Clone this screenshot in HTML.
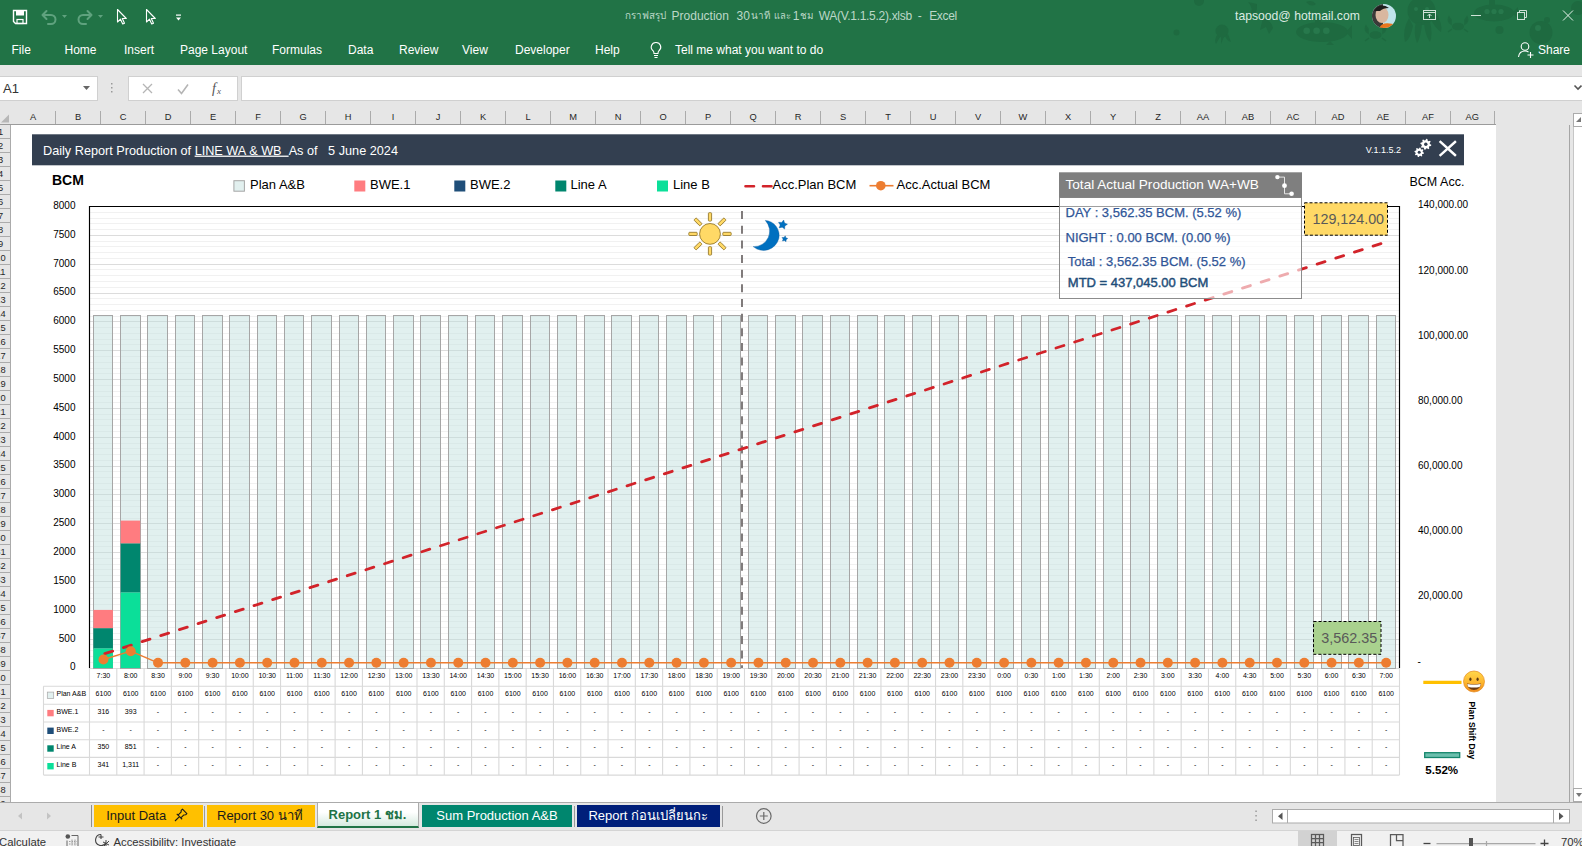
<!DOCTYPE html>
<html lang="en"><head><meta charset="utf-8"><title>Report 1 ชม. - Excel</title>
<style>
*{box-sizing:border-box}
html,body{margin:0;padding:0}
body{width:1582px;height:846px;position:relative;overflow:hidden;background:#fff;font-family:"Liberation Sans", sans-serif;font-size:12px;color:#000}
.abs{position:absolute}
#titlebar{left:0;top:0;width:1582px;height:65px;background:#217346;overflow:hidden}
#titlebar .t{position:absolute;white-space:nowrap;color:#fff;font-size:12px;line-height:14px}
#fbar{left:0;top:65px;width:1582px;height:60px;background:#e6e6e6}
#namebox{left:0;top:75.5px;width:98px;height:25.5px;background:#fff;border:1px solid #d0d0d0;border-left:none}
#fxbox{left:128px;top:75.5px;width:110px;height:25.5px;background:#fff;border:1px solid #d0d0d0}
#finput{left:241px;top:75.5px;width:1341px;height:25.5px;background:#fff;border:1px solid #d0d0d0;border-right:none}
#colhdr{left:0;top:109px;width:1496px;height:16px}
#colhdr .c{position:absolute;top:2px;height:13px;width:45px;text-align:center;font-size:9.3px;line-height:13px;color:#262626;border-right:1px solid #ababab}
#rowhdr{left:0;top:125px;width:11px;height:677px;background:#e6e6e6;border-right:1px solid #ababab;overflow:hidden}
#rowhdr .r{position:absolute;left:-20px;width:41px;height:14px;text-align:center;font-size:9.3px;line-height:14px;color:#262626;border-bottom:1px solid #ababab}
#sheet{left:11px;top:125px;width:1485px;height:677px;background:#fff}
#rgray{left:1496px;top:125px;width:86px;height:677px;background:#e6e6e6}
#tabbar{left:0;top:802px;width:1582px;height:28px;background:#e6e6e6;border-top:1px solid #ababab}
.tab{position:absolute;top:805px;height:22px;line-height:21px;font-size:13px;text-align:center;white-space:nowrap}
#status{left:0;top:830px;width:1582px;height:16px;background:#f1f1f1;border-top:1px solid #d4d4d4;font-size:11px;color:#333}
#status .t{position:absolute;top:4.5px;white-space:nowrap;line-height:13px;font-size:11.3px}
</style></head>
<body>
<div id="titlebar" class="abs">
<svg class="abs" style="left:1170px;top:0" width="412" height="65" viewBox="1170 0 412 65">
<g fill="#1e6a40">
<path d="M1296 32a26 10 0 0 1 52 0a26 10 0 0 1 -52 0z"/><path d="M1315 23v-5h6v5z"/><path d="M1346 32l6-7v14z"/><path d="M1330 41l4 4h-8z"/>
<circle cx="1421.500" cy="11" r="14"/><path d="M1409 18q-7 12-4 24q5-2 8-16zM1416 22q-3 12 1 21q4-6 5-20zM1424 23q1 12 6 19q3-8 0-20zM1430 18q5 10 11 14q2-8-5-19z"/>
<circle cx="1222" cy="31" r="6.500"/><path d="M1217 35q-3 5-1 9l4-7zM1221 37v7l3-7zM1225 36q2 5 6 6l-3-8z"/>
<ellipse cx="1375.500" cy="35" rx="6" ry="3.800"/><path d="M1368 33q-4-3-2-7l2 3zM1383 33q4-3 2-7l-2 3zM1369 38l-4 3M1382 38l4 3" stroke="#1e6a40" stroke-width="1.500"/>
<ellipse cx="1458" cy="26.500" rx="6" ry="3.800"/><path d="M1451 24q-4-3-2-7l2 3zM1465 24q4-3 2-7l-2 3zM1452 29l-4 3M1464 29l4 3" stroke="#1e6a40" stroke-width="1.500"/>
<path d="M1474 13a20 8.500 0 0 1 40 0a20 8.500 0 0 1 -40 0z"/><path d="M1489 5v-5h6v5z"/><path d="M1512 13l6-6v12z"/>
<circle cx="1499.500" cy="30" r="4"/><circle cx="1541" cy="32.500" r="11.500"/><circle cx="1547" cy="20" r="3"/>
<circle cx="1176.500" cy="32.500" r="3"/><circle cx="1199" cy="1" r="5"/><circle cx="1578" cy="8" r="7"/>
<path d="M1248 2q6 6 2 14q8-2 7-12z"/><path d="M1263 18q8 2 10 10l-4 6l-3-7l-6 3z"/><path d="M1306 2q6-3 10 2q-5 4-10-2z"/>
</g>
<g fill="#27784c"><circle cx="1306.700" cy="30.700" r="3.300"/><circle cx="1316.600" cy="30.700" r="3.300"/><circle cx="1326.300" cy="30.700" r="3.300"/>
<circle cx="1487" cy="11.500" r="2.600"/><circle cx="1494" cy="11.500" r="2.600"/><circle cx="1501" cy="11.500" r="2.600"/>
<circle cx="1416" cy="9" r="2"/><circle cx="1427" cy="9" r="2"/><circle cx="1538" cy="28" r="3"/></g></svg>
<svg class="abs" style="left:0;top:0" width="240" height="34" viewBox="0 0 240 34" fill="none">
<path d="M13.5 10.5h13v13h-11l-2-2z" stroke="#fff" stroke-width="1.4"/><rect x="16" y="10.5" width="8" height="5" fill="#fff"/><rect x="17" y="19.5" width="6" height="4" stroke="#fff" stroke-width="1.2"/>
<g stroke="#5fa27e" stroke-width="2" stroke-linecap="round" stroke-linejoin="round">
<path d="M46.5 11l-4 4l4 4"/><path d="M43 15h8a4.5 4.5 0 0 1 0 9h-3"/>
<path d="M87.5 11l4 4l-4 4"/><path d="M91 15h-8a4.5 4.5 0 0 0 0 9h3"/>
</g>
<path d="M62 15h5l-2.500 3z" fill="#5fa27e"/><path d="M98 15h5l-2.500 3z" fill="#5fa27e"/>
<path d="M117.500 9.500v12.500l3-2.800l2.200 4.800l1.800-.8l-2.200-4.700h4z" stroke="#fff" stroke-width="1.100" stroke-linejoin="round"/>
<path d="M146.500 9.500v12.500l3-2.800l2.200 4.800l1.800-.8l-2.200-4.700h4z" stroke="#fff" stroke-width="1.100" stroke-linejoin="round"/>
<rect x="176" y="14.500" width="5" height="1.200" fill="#fff"/><path d="M176 17.500h5l-2.500 3z" fill="#fff"/>
</svg>
<div class="t" style="left:625.300px;top:9px;width:335px;height:14px;color:#bcd8c8" id="ttl"><span class="abs" style="left:0;font-size:9.800px" id="th1">กราฟสรุป</span> <span class="abs" style="left:46.300px" id="s2">Production</span> <span class="abs" style="left:111.200px">30</span> <span class="abs" style="left:125.900px;font-size:9.800px" id="th2">นาที</span> <span class="abs" style="left:148.700px;font-size:9.400px" id="th3">และ</span> <span class="abs" style="left:167.400px">1</span> <span class="abs" style="left:175.200px;font-size:9.800px" id="th4">ชม</span> <span class="abs" style="left:193.400px;letter-spacing:-0.300px" id="s8">WA(V.1.1.5.2).xlsb</span> <span class="abs" style="left:292.500px">-</span> <span class="abs" style="left:303.900px;letter-spacing:-0.350px" id="s10">Excel</span></div>
<div class="t" style="left:1235px;top:9px;color:#dcebe2;font-size:12.200px" id="mail">tapsood@ hotmail.com</div>
<svg class="abs" style="left:1371px;top:3px" width="26" height="26" viewBox="0 0 26 26"><defs><clipPath id="av"><circle cx="13" cy="13" r="12"/></clipPath></defs>
<g clip-path="url(#av)"><rect width="26" height="26" fill="#bfe3ea"/><rect x="0" y="0" width="12" height="26" fill="#3a3a38"/><ellipse cx="11" cy="12" rx="6.500" ry="8" fill="#d9b79f"/><path d="M3 8q6-9 15-3q-6 0-9 3z" fill="#1d1d1d"/><path d="M8 26q2-8 14-5v5z" fill="#e8761d"/></g></svg>
<svg class="abs" style="left:1415px;top:0" width="167" height="32" viewBox="1415 0 167 32" fill="none" stroke="#fff" stroke-width="1">
<g stroke="#cfe3d8"><rect x="1423.500" y="10.500" width="12" height="9"/><path d="M1423.500 12.500h12M1429.500 18v-4M1427.500 16l2-2l2 2"/></g>
<path d="M1471 15.500h10" stroke="#cfe3d8"/>
<g stroke="#cfe3d8"><rect x="1517.500" y="12.500" width="7" height="7"/><path d="M1519.500 12.500v-2h7v7h-2"/></g>
<path d="M1563 10.500l10 10M1573 10.500l-10 10" stroke="#e6f1ea"/>
</svg>
<div class="t" style="left:11.5px;top:43px">File</div><div class="t" style="left:64.5px;top:43px">Home</div><div class="t" style="left:124px;top:43px">Insert</div><div class="t" style="left:180px;top:43px">Page Layout</div><div class="t" style="left:272px;top:43px">Formulas</div><div class="t" style="left:348px;top:43px">Data</div><div class="t" style="left:399px;top:43px">Review</div><div class="t" style="left:462px;top:43px">View</div><div class="t" style="left:515px;top:43px">Developer</div><div class="t" style="left:595px;top:43px">Help</div>
<svg class="abs" style="left:648px;top:40px" width="16" height="20" viewBox="0 0 16 20" fill="none" stroke="#fff" stroke-width="1.100"><path d="M8 2.500a4.600 4.600 0 0 0-3 8.200c.8.800 1 1.500 1 2.800h4c0-1.300.2-2 1-2.800a4.600 4.600 0 0 0-3-8.200z"/><path d="M6 15.500h4M6.500 17.500h3"/></svg>
<div class="t" style="left:675px;top:43px;" id="tell">Tell me what you want to do</div>
<svg class="abs" style="left:1516px;top:40px" width="20" height="20" viewBox="0 0 20 20" fill="none" stroke="#fff" stroke-width="1.100"><circle cx="9" cy="6.500" r="3.800"/><path d="M2.500 17c.5-4 3-6 6.500-6c1.500 0 2.500.3 3.500 1M14.500 12v6M11.500 15h6"/></svg>
<div class="t" style="left:1538px;top:43px">Share</div>
</div>
<div id="fbar" class="abs"></div>
<div id="namebox" class="abs"><span class="abs" style="left:3px;top:4px;font-size:13px;line-height:15px;color:#333">A1</span><svg class="abs" style="left:82px;top:8px" width="9" height="6" viewBox="0 0 9 6"><path d="M1 1h7l-3.500 4z" fill="#666"/></svg></div>
<svg class="abs" style="left:108px;top:80px" width="8" height="16" viewBox="0 0 8 16" fill="#9a9a9a"><rect x="3" y="3" width="1.500" height="1.500"/><rect x="3" y="7" width="1.500" height="1.500"/><rect x="3" y="11" width="1.500" height="1.500"/></svg>
<div id="fxbox" class="abs"><svg class="abs" style="left:0;top:0" width="106" height="23" viewBox="0 0 106 23" fill="none"><path d="M14 7l9 9M23 7l-9 9" stroke="#b5b5b5" stroke-width="1.300"/><path d="M49 12.500l3.500 4l6.500-9" stroke="#b5b5b5" stroke-width="1.600"/><text x="83" y="16" font-family="'Liberation Serif', serif" font-style="italic" font-size="14" fill="#555" stroke="none">f</text><text x="88" y="16.500" font-family="'Liberation Serif', serif" font-style="italic" font-size="9" fill="#555" stroke="none">x</text></svg></div>
<div id="finput" class="abs"><svg class="abs" style="left:1330.500px;top:7px" width="10" height="8" viewBox="0 0 10 8" fill="none" stroke="#555" stroke-width="1.600"><path d="M1.500 1.500l3.500 3.500l3.500-3.500"/></svg></div>
<div id="colhdr" class="abs"><div class="c" style="left:11.0px;width:45.0px">A</div><div class="c" style="left:56.0px;width:45.0px">B</div><div class="c" style="left:101.0px;width:45.0px">C</div><div class="c" style="left:146.0px;width:45.0px">D</div><div class="c" style="left:191.0px;width:45.0px">E</div><div class="c" style="left:236.0px;width:45.0px">F</div><div class="c" style="left:281.0px;width:45.0px">G</div><div class="c" style="left:326.0px;width:45.0px">H</div><div class="c" style="left:371.0px;width:45.0px">I</div><div class="c" style="left:416.0px;width:45.0px">J</div><div class="c" style="left:461.0px;width:45.0px">K</div><div class="c" style="left:506.0px;width:45.0px">L</div><div class="c" style="left:551.0px;width:45.0px">M</div><div class="c" style="left:596.0px;width:45.0px">N</div><div class="c" style="left:641.0px;width:45.0px">O</div><div class="c" style="left:686.0px;width:45.0px">P</div><div class="c" style="left:731.0px;width:45.0px">Q</div><div class="c" style="left:776.0px;width:45.0px">R</div><div class="c" style="left:821.0px;width:45.0px">S</div><div class="c" style="left:866.0px;width:45.0px">T</div><div class="c" style="left:911.0px;width:45.0px">U</div><div class="c" style="left:956.0px;width:45.0px">V</div><div class="c" style="left:1001.0px;width:45.0px">W</div><div class="c" style="left:1046.0px;width:45.0px">X</div><div class="c" style="left:1091.0px;width:45.0px">Y</div><div class="c" style="left:1136.0px;width:45.0px">Z</div><div class="c" style="left:1181.0px;width:45.0px">AA</div><div class="c" style="left:1226.0px;width:45.0px">AB</div><div class="c" style="left:1271.0px;width:45.0px">AC</div><div class="c" style="left:1316.0px;width:45.0px">AD</div><div class="c" style="left:1361.0px;width:45.0px">AE</div><div class="c" style="left:1406.0px;width:45.0px">AF</div><div class="c" style="left:1451.0px;width:43.5px">AG</div><svg class="abs" style="left:0;top:3px" width="11" height="13" viewBox="0 0 11 13"><path d="M9 2.500v8h-8z" fill="#b7b7b7"/></svg></div>
<div class="abs" style="left:0;top:124px;width:1496px;height:1px;background:#9b9b9b"></div>
<div id="rowhdr" class="abs"><div class="r" style="top:-0.1px">1</div><div class="r" style="top:13.9px">2</div><div class="r" style="top:27.9px">3</div><div class="r" style="top:41.9px">4</div><div class="r" style="top:55.9px">5</div><div class="r" style="top:69.9px">6</div><div class="r" style="top:83.9px">7</div><div class="r" style="top:97.9px">8</div><div class="r" style="top:111.9px">9</div><div class="r" style="top:125.9px">10</div><div class="r" style="top:139.9px">11</div><div class="r" style="top:153.9px">12</div><div class="r" style="top:167.9px">13</div><div class="r" style="top:181.9px">14</div><div class="r" style="top:195.9px">15</div><div class="r" style="top:209.9px">16</div><div class="r" style="top:223.9px">17</div><div class="r" style="top:237.9px">18</div><div class="r" style="top:251.9px">19</div><div class="r" style="top:265.9px">20</div><div class="r" style="top:279.9px">21</div><div class="r" style="top:293.9px">22</div><div class="r" style="top:307.9px">23</div><div class="r" style="top:321.9px">24</div><div class="r" style="top:335.9px">25</div><div class="r" style="top:349.9px">26</div><div class="r" style="top:363.9px">27</div><div class="r" style="top:377.9px">28</div><div class="r" style="top:391.9px">29</div><div class="r" style="top:405.9px">30</div><div class="r" style="top:419.9px">31</div><div class="r" style="top:433.9px">32</div><div class="r" style="top:447.9px">33</div><div class="r" style="top:461.9px">34</div><div class="r" style="top:475.9px">35</div><div class="r" style="top:489.9px">36</div><div class="r" style="top:503.9px">37</div><div class="r" style="top:517.9px">38</div><div class="r" style="top:531.9px">39</div><div class="r" style="top:545.9px">40</div><div class="r" style="top:559.9px">41</div><div class="r" style="top:573.9px">42</div><div class="r" style="top:587.9px">43</div><div class="r" style="top:601.9px">44</div><div class="r" style="top:615.9px">45</div><div class="r" style="top:629.9px">46</div><div class="r" style="top:643.9px">47</div><div class="r" style="top:657.9px">48</div><div class="r" style="top:671.9px">49</div></div>
<div id="sheet" class="abs"></div>
<div id="rgray" class="abs"><div class="abs" style="left:73px;top:0;width:1px;height:677px;background:#a6a6a6"></div><div class="abs" style="left:77px;top:-12px;width:10px;height:690px;background:#fff;border:1px solid #c6c6c6;border-right:none"></div><div class="abs" style="left:77px;top:-12px;width:10px;height:14px;background:#fff;border:1px solid #ababab;border-right:none"></div><svg class="abs" style="left:80px;top:-8px" width="6" height="6" viewBox="0 0 6 6"><path d="M0 5l5-5v5z" fill="#777"/></svg><div class="abs" style="left:77px;top:663px;width:10px;height:14px;background:#fff;border:1px solid #ababab;border-right:none"></div><svg class="abs" style="left:80px;top:668px" width="6" height="6" viewBox="0 0 6 6"><path d="M0 0h6l-3 4z" fill="#777"/></svg></div>
<svg class="abs" id="chart" style="left:0;top:0" width="1582" height="846" viewBox="0 0 1582 846" font-family='"Liberation Sans", sans-serif'>
<rect x="32" y="134.300" width="1432" height="31" fill="#333f50"/>
<text x="43" y="154.600" font-size="12.700" fill="#fff" id="bantxt">Daily Report Production of <tspan text-decoration="underline">LINE WA &amp; WB&#160;&#160;</tspan>As of&#160;&#160; 5 June 2024</text>
<text x="1401" y="153" font-size="9" fill="#fff" text-anchor="end">V.1.1.5.2</text>
<polygon points="1431.27,144.84 1431.06,145.90 1429.42,146.23 1428.97,146.90 1429.29,148.55 1428.39,149.15 1426.99,148.22 1426.20,148.38 1425.26,149.77 1424.20,149.56 1423.87,147.92 1423.20,147.47 1421.55,147.79 1420.95,146.89 1421.88,145.49 1421.72,144.70 1420.33,143.76 1420.54,142.70 1422.18,142.37 1422.63,141.70 1422.31,140.05 1423.21,139.45 1424.61,140.38 1425.40,140.22 1426.34,138.83 1427.40,139.04 1427.73,140.68 1428.40,141.13 1430.05,140.81 1430.65,141.71 1429.72,143.11 1429.88,143.90" fill="#fff"/><circle cx="1425.80" cy="144.30" r="1.70" fill="#333f50"/><polygon points="1423.98,152.77 1423.79,153.69 1422.37,154.00 1421.98,154.58 1422.25,156.01 1421.46,156.53 1420.25,155.74 1419.55,155.88 1418.73,157.08 1417.81,156.89 1417.50,155.47 1416.92,155.08 1415.49,155.35 1414.97,154.56 1415.76,153.35 1415.62,152.65 1414.42,151.83 1414.61,150.91 1416.03,150.60 1416.42,150.02 1416.15,148.59 1416.94,148.07 1418.15,148.86 1418.85,148.72 1419.67,147.52 1420.59,147.71 1420.90,149.13 1421.48,149.52 1422.91,149.25 1423.43,150.04 1422.64,151.25 1422.78,151.95" fill="#fff"/><circle cx="1419.20" cy="152.30" r="1.50" fill="#333f50"/>
<path d="M1440.500 142l14.500 13M1455 142l-14.500 13" stroke="#fff" stroke-width="2.400" stroke-linecap="square" fill="none"/>
<text x="52" y="185" font-size="14" font-weight="bold" fill="#000">BCM</text>
<text x="1409.500" y="186.300" font-size="12.500" fill="#000">BCM Acc.</text>
<g font-size="13" fill="#000">
<rect x="233.900" y="180.700" width="10.500" height="10.500" fill="#e2f0ef" stroke="#a6a6a6" stroke-width="1"/><text x="250" y="189.300">Plan A&amp;B</text>
<rect x="354.300" y="180.500" width="11" height="11" fill="#ff7c80"/><text x="370" y="189.300">BWE.1</text>
<rect x="454.300" y="180.500" width="11" height="11" fill="#1f4e79"/><text x="470" y="189.300">BWE.2</text>
<rect x="555.300" y="180.500" width="11" height="11" fill="#00866e"/><text x="570.500" y="189.300">Line A</text>
<rect x="657" y="180.500" width="11" height="11" fill="#0bdf99"/><text x="673" y="189.300">Line B</text>
<path d="M745.500 186.200h8.500M763 186.200h8.500" stroke="#d2232a" stroke-width="2.600" stroke-linecap="round"/><text x="772.500" y="189.300">Acc.Plan BCM</text>
<path d="M869.500 185.700h24" stroke="#ed7d31" stroke-width="1.600"/><circle cx="880.800" cy="185.700" r="4.800" fill="#ed7d31"/><text x="896.500" y="189.300">Acc.Actual BCM</text>
</g>
<g shape-rendering="crispEdges">
<path d="M89.5 662.23H1399.5M89.5 656.46H1399.5M89.5 650.69H1399.5M89.5 644.92H1399.5M89.5 633.39H1399.5M89.5 627.62H1399.5M89.5 621.85H1399.5M89.5 616.08H1399.5M89.5 604.54H1399.5M89.5 598.77H1399.5M89.5 593.01H1399.5M89.5 587.24H1399.5M89.5 575.70H1399.5M89.5 569.93H1399.5M89.5 564.16H1399.5M89.5 558.39H1399.5M89.5 546.86H1399.5M89.5 541.09H1399.5M89.5 535.32H1399.5M89.5 529.55H1399.5M89.5 518.01H1399.5M89.5 512.24H1399.5M89.5 506.48H1399.5M89.5 500.71H1399.5M89.5 489.17H1399.5M89.5 483.40H1399.5M89.5 477.63H1399.5M89.5 471.86H1399.5M89.5 460.32H1399.5M89.5 454.56H1399.5M89.5 448.79H1399.5M89.5 443.02H1399.5M89.5 431.48H1399.5M89.5 425.71H1399.5M89.5 419.94H1399.5M89.5 414.17H1399.5M89.5 402.64H1399.5M89.5 396.87H1399.5M89.5 391.10H1399.5M89.5 385.33H1399.5M89.5 373.79H1399.5M89.5 368.02H1399.5M89.5 362.26H1399.5M89.5 356.49H1399.5M89.5 344.95H1399.5M89.5 339.18H1399.5M89.5 333.41H1399.5M89.5 327.64H1399.5M89.5 316.11H1399.5M89.5 310.34H1399.5M89.5 304.57H1399.5M89.5 298.80H1399.5M89.5 287.26H1399.5M89.5 281.49H1399.5M89.5 275.73H1399.5M89.5 269.96H1399.5M89.5 258.42H1399.5M89.5 252.65H1399.5M89.5 246.88H1399.5M89.5 241.11H1399.5M89.5 229.58H1399.5M89.5 223.81H1399.5M89.5 218.04H1399.5M89.5 212.27H1399.5" stroke="#f1f1f1" stroke-width="1" fill="none"/>
<path d="M89.5 668.00H1399.5M89.5 639.16H1399.5M89.5 610.31H1399.5M89.5 581.47H1399.5M89.5 552.62H1399.5M89.5 523.78H1399.5M89.5 494.94H1399.5M89.5 466.09H1399.5M89.5 437.25H1399.5M89.5 408.41H1399.5M89.5 379.56H1399.5M89.5 350.72H1399.5M89.5 321.88H1399.5M89.5 293.03H1399.5M89.5 264.19H1399.5M89.5 235.34H1399.5M89.5 206.50H1399.5" stroke="#dcdcdc" stroke-width="1" fill="none"/>
</g>
<path d="M93.40 315.41h19.50V668.00h-19.50zM120.69 315.41h19.50V668.00h-19.50zM147.98 315.41h19.50V668.00h-19.50zM175.27 315.41h19.50V668.00h-19.50zM202.56 315.41h19.50V668.00h-19.50zM229.85 315.41h19.50V668.00h-19.50zM257.15 315.41h19.50V668.00h-19.50zM284.44 315.41h19.50V668.00h-19.50zM311.73 315.41h19.50V668.00h-19.50zM339.02 315.41h19.50V668.00h-19.50zM366.31 315.41h19.50V668.00h-19.50zM393.60 315.41h19.50V668.00h-19.50zM420.90 315.41h19.50V668.00h-19.50zM448.19 315.41h19.50V668.00h-19.50zM475.48 315.41h19.50V668.00h-19.50zM502.77 315.41h19.50V668.00h-19.50zM530.06 315.41h19.50V668.00h-19.50zM557.35 315.41h19.50V668.00h-19.50zM584.65 315.41h19.50V668.00h-19.50zM611.94 315.41h19.50V668.00h-19.50zM639.23 315.41h19.50V668.00h-19.50zM666.52 315.41h19.50V668.00h-19.50zM693.81 315.41h19.50V668.00h-19.50zM721.10 315.41h19.50V668.00h-19.50zM748.40 315.41h19.50V668.00h-19.50zM775.69 315.41h19.50V668.00h-19.50zM802.98 315.41h19.50V668.00h-19.50zM830.27 315.41h19.50V668.00h-19.50zM857.56 315.41h19.50V668.00h-19.50zM884.85 315.41h19.50V668.00h-19.50zM912.15 315.41h19.50V668.00h-19.50zM939.44 315.41h19.50V668.00h-19.50zM966.73 315.41h19.50V668.00h-19.50zM994.02 315.41h19.50V668.00h-19.50zM1021.31 315.41h19.50V668.00h-19.50zM1048.60 315.41h19.50V668.00h-19.50zM1075.90 315.41h19.50V668.00h-19.50zM1103.19 315.41h19.50V668.00h-19.50zM1130.48 315.41h19.50V668.00h-19.50zM1157.77 315.41h19.50V668.00h-19.50zM1185.06 315.41h19.50V668.00h-19.50zM1212.35 315.41h19.50V668.00h-19.50zM1239.65 315.41h19.50V668.00h-19.50zM1266.94 315.41h19.50V668.00h-19.50zM1294.23 315.41h19.50V668.00h-19.50zM1321.52 315.41h19.50V668.00h-19.50zM1348.81 315.41h19.50V668.00h-19.50zM1376.10 315.41h19.50V668.00h-19.50z" fill="#bfe0dd" fill-opacity="0.470" stroke="#a6a6a6" stroke-width="1" shape-rendering="crispEdges"/>
<rect x="93.40" y="648.33" width="19.50" height="19.67" fill="#0bdf99"/><rect x="93.40" y="628.14" width="19.50" height="20.19" fill="#00866e"/><rect x="93.40" y="609.91" width="19.50" height="18.23" fill="#ff7c80"/><rect x="120.69" y="592.37" width="19.50" height="75.63" fill="#0bdf99"/><rect x="120.69" y="543.28" width="19.50" height="49.09" fill="#00866e"/><rect x="120.69" y="520.61" width="19.50" height="22.67" fill="#ff7c80"/>
<path d="M89.5 668.0V206.5H1399.5V668.0" fill="none" stroke="#000" stroke-width="1.150"/>
<g font-size="10" fill="#000" text-anchor="end">
<text x="75.500" y="670.3">0</text><text x="75.500" y="641.5">500</text><text x="75.500" y="612.6">1000</text><text x="75.500" y="583.8">1500</text><text x="75.500" y="554.9">2000</text><text x="75.500" y="526.1">2500</text><text x="75.500" y="497.2">3000</text><text x="75.500" y="468.4">3500</text><text x="75.500" y="439.6">4000</text><text x="75.500" y="410.7">4500</text><text x="75.500" y="381.9">5000</text><text x="75.500" y="353.0">5500</text><text x="75.500" y="324.2">6000</text><text x="75.500" y="295.3">6500</text><text x="75.500" y="266.5">7000</text><text x="75.500" y="237.6">7500</text><text x="75.500" y="208.8">8000</text></g>
<g font-size="10" fill="#000">
<text x="1418" y="599.4">20,000.00</text><text x="1418" y="534.2">40,000.00</text><text x="1418" y="469.0">60,000.00</text><text x="1418" y="403.9">80,000.00</text><text x="1418" y="338.7">100,000.00</text><text x="1418" y="273.5">120,000.00</text><text x="1418" y="208.3">140,000.00</text><text x="1417.500" y="665.4">-</text></g>
<path d="M742 211.100V668" stroke="#6b6565" stroke-width="1.700" stroke-dasharray="8 6.650" fill="none"/>
<g stroke="#8a6d1f" stroke-width="0.800" fill="#ffd966"><circle cx="710" cy="233.900" r="10.400"/><rect x="-1.600" y="-21.200" width="3.200" height="8.400" rx="0.800" transform="translate(710 233.900) rotate(0)"/><rect x="-1.600" y="-21.200" width="3.200" height="8.400" rx="0.800" transform="translate(710 233.900) rotate(45)"/><rect x="-1.600" y="-21.200" width="3.200" height="8.400" rx="0.800" transform="translate(710 233.900) rotate(90)"/><rect x="-1.600" y="-21.200" width="3.200" height="8.400" rx="0.800" transform="translate(710 233.900) rotate(135)"/><rect x="-1.600" y="-21.200" width="3.200" height="8.400" rx="0.800" transform="translate(710 233.900) rotate(180)"/><rect x="-1.600" y="-21.200" width="3.200" height="8.400" rx="0.800" transform="translate(710 233.900) rotate(225)"/><rect x="-1.600" y="-21.200" width="3.200" height="8.400" rx="0.800" transform="translate(710 233.900) rotate(270)"/><rect x="-1.600" y="-21.200" width="3.200" height="8.400" rx="0.800" transform="translate(710 233.900) rotate(315)"/></g>
<g fill="#0070c0" stroke="#0a5a9c" stroke-width="0.400"><path d="M765.300 220.400 A15.500 15.500 0 0 1 753.200 246.600 A15.800 15.800 0 0 0 778.800 238.500 A15 15 0 0 0 765.300 220.400z" transform="rotate(0 766 235)"/><polygon points="783.70,220.00 784.56,223.03 787.47,224.20 784.87,225.95 784.65,229.09 782.18,227.15 779.13,227.91 780.21,224.96 778.54,222.30 781.68,222.42"/><polygon points="785.24,235.85 785.85,237.79 787.77,238.47 786.11,239.65 786.06,241.69 784.42,240.48 782.47,241.05 783.12,239.12 781.96,237.44 784.00,237.46"/></g>
<path d="M103.45 654.03L1386.15 241.95" stroke="#d2232a" stroke-width="2.800" stroke-linecap="round" stroke-dasharray="8.300 11.290" stroke-dashoffset="-1.400" fill="none" id="planline"/>
<path d="M103.45 659.52 L130.74 651.19 L158.03 662.80 L185.32 662.80 L212.61 662.80 L239.90 662.80 L267.20 662.80 L294.49 662.80 L321.78 662.80 L349.07 662.80 L376.36 662.80 L403.65 662.80 L430.95 662.80 L458.24 662.80 L485.53 662.80 L512.82 662.80 L540.11 662.80 L567.40 662.80 L594.70 662.80 L621.99 662.80 L649.28 662.80 L676.57 662.80 L703.86 662.80 L731.15 662.80 L758.45 662.80 L785.74 662.80 L813.03 662.80 L840.32 662.80 L867.61 662.80 L894.90 662.80 L922.20 662.80 L949.49 662.80 L976.78 662.80 L1004.07 662.80 L1031.36 662.80 L1058.65 662.80 L1085.95 662.80 L1113.24 662.80 L1140.53 662.80 L1167.82 662.80 L1195.11 662.80 L1222.40 662.80 L1249.70 662.80 L1276.99 662.80 L1304.28 662.80 L1331.57 662.80 L1358.86 662.80 L1386.15 662.80" stroke="#ed7d31" stroke-width="1.400" fill="none" stroke-linejoin="round"/>
<g fill="#ed7d31"><circle cx="103.45" cy="659.52" r="5"/><circle cx="130.74" cy="651.19" r="5"/><circle cx="158.03" cy="662.80" r="5"/><circle cx="185.32" cy="662.80" r="5"/><circle cx="212.61" cy="662.80" r="5"/><circle cx="239.90" cy="662.80" r="5"/><circle cx="267.20" cy="662.80" r="5"/><circle cx="294.49" cy="662.80" r="5"/><circle cx="321.78" cy="662.80" r="5"/><circle cx="349.07" cy="662.80" r="5"/><circle cx="376.36" cy="662.80" r="5"/><circle cx="403.65" cy="662.80" r="5"/><circle cx="430.95" cy="662.80" r="5"/><circle cx="458.24" cy="662.80" r="5"/><circle cx="485.53" cy="662.80" r="5"/><circle cx="512.82" cy="662.80" r="5"/><circle cx="540.11" cy="662.80" r="5"/><circle cx="567.40" cy="662.80" r="5"/><circle cx="594.70" cy="662.80" r="5"/><circle cx="621.99" cy="662.80" r="5"/><circle cx="649.28" cy="662.80" r="5"/><circle cx="676.57" cy="662.80" r="5"/><circle cx="703.86" cy="662.80" r="5"/><circle cx="731.15" cy="662.80" r="5"/><circle cx="758.45" cy="662.80" r="5"/><circle cx="785.74" cy="662.80" r="5"/><circle cx="813.03" cy="662.80" r="5"/><circle cx="840.32" cy="662.80" r="5"/><circle cx="867.61" cy="662.80" r="5"/><circle cx="894.90" cy="662.80" r="5"/><circle cx="922.20" cy="662.80" r="5"/><circle cx="949.49" cy="662.80" r="5"/><circle cx="976.78" cy="662.80" r="5"/><circle cx="1004.07" cy="662.80" r="5"/><circle cx="1031.36" cy="662.80" r="5"/><circle cx="1058.65" cy="662.80" r="5"/><circle cx="1085.95" cy="662.80" r="5"/><circle cx="1113.24" cy="662.80" r="5"/><circle cx="1140.53" cy="662.80" r="5"/><circle cx="1167.82" cy="662.80" r="5"/><circle cx="1195.11" cy="662.80" r="5"/><circle cx="1222.40" cy="662.80" r="5"/><circle cx="1249.70" cy="662.80" r="5"/><circle cx="1276.99" cy="662.80" r="5"/><circle cx="1304.28" cy="662.80" r="5"/><circle cx="1331.57" cy="662.80" r="5"/><circle cx="1358.86" cy="662.80" r="5"/><circle cx="1386.15" cy="662.80" r="5"/></g>
<path d="M89.50 668.0V775.1M116.79 668.0V775.1M144.08 668.0V775.1M171.38 668.0V775.1M198.67 668.0V775.1M225.96 668.0V775.1M253.25 668.0V775.1M280.54 668.0V775.1M307.83 668.0V775.1M335.12 668.0V775.1M362.42 668.0V775.1M389.71 668.0V775.1M417.00 668.0V775.1M444.29 668.0V775.1M471.58 668.0V775.1M498.88 668.0V775.1M526.17 668.0V775.1M553.46 668.0V775.1M580.75 668.0V775.1M608.04 668.0V775.1M635.33 668.0V775.1M662.62 668.0V775.1M689.92 668.0V775.1M717.21 668.0V775.1M744.50 668.0V775.1M771.79 668.0V775.1M799.08 668.0V775.1M826.38 668.0V775.1M853.67 668.0V775.1M880.96 668.0V775.1M908.25 668.0V775.1M935.54 668.0V775.1M962.83 668.0V775.1M990.12 668.0V775.1M1017.42 668.0V775.1M1044.71 668.0V775.1M1072.00 668.0V775.1M1099.29 668.0V775.1M1126.58 668.0V775.1M1153.88 668.0V775.1M1181.17 668.0V775.1M1208.46 668.0V775.1M1235.75 668.0V775.1M1263.04 668.0V775.1M1290.33 668.0V775.1M1317.62 668.0V775.1M1344.92 668.0V775.1M1372.21 668.0V775.1M1399.50 668.0V775.1M43.5 686.3V775.1M43.5 686.3H1399.5M43.5 704.3H1399.5M43.5 722.0H1399.5M43.5 739.7H1399.5M43.5 757.4H1399.5M43.5 775.1H1399.5" stroke="#d9d9d9" stroke-width="1.100" fill="none"/>
<g font-size="7" fill="#000" text-anchor="middle">
<g><text x="103.4" y="678.2">7:30</text><text x="130.7" y="678.2">8:00</text><text x="158.0" y="678.2">8:30</text><text x="185.3" y="678.2">9:00</text><text x="212.6" y="678.2">9:30</text><text x="239.9" y="678.2">10:00</text><text x="267.2" y="678.2">10:30</text><text x="294.5" y="678.2">11:00</text><text x="321.8" y="678.2">11:30</text><text x="349.1" y="678.2">12:00</text><text x="376.4" y="678.2">12:30</text><text x="403.7" y="678.2">13:00</text><text x="430.9" y="678.2">13:30</text><text x="458.2" y="678.2">14:00</text><text x="485.5" y="678.2">14:30</text><text x="512.8" y="678.2">15:00</text><text x="540.1" y="678.2">15:30</text><text x="567.4" y="678.2">16:00</text><text x="594.7" y="678.2">16:30</text><text x="622.0" y="678.2">17:00</text><text x="649.3" y="678.2">17:30</text><text x="676.6" y="678.2">18:00</text><text x="703.9" y="678.2">18:30</text><text x="731.2" y="678.2">19:00</text><text x="758.4" y="678.2">19:30</text><text x="785.7" y="678.2">20:00</text><text x="813.0" y="678.2">20:30</text><text x="840.3" y="678.2">21:00</text><text x="867.6" y="678.2">21:30</text><text x="894.9" y="678.2">22:00</text><text x="922.2" y="678.2">22:30</text><text x="949.5" y="678.2">23:00</text><text x="976.8" y="678.2">23:30</text><text x="1004.1" y="678.2">0:00</text><text x="1031.4" y="678.2">0:30</text><text x="1058.7" y="678.2">1:00</text><text x="1085.9" y="678.2">1:30</text><text x="1113.2" y="678.2">2:00</text><text x="1140.5" y="678.2">2:30</text><text x="1167.8" y="678.2">3:00</text><text x="1195.1" y="678.2">3:30</text><text x="1222.4" y="678.2">4:00</text><text x="1249.7" y="678.2">4:30</text><text x="1277.0" y="678.2">5:00</text><text x="1304.3" y="678.2">5:30</text><text x="1331.6" y="678.2">6:00</text><text x="1358.9" y="678.2">6:30</text><text x="1386.2" y="678.2">7:00</text></g>
<g><text x="103.4" y="696.1">6100</text><text x="130.7" y="696.1">6100</text><text x="158.0" y="696.1">6100</text><text x="185.3" y="696.1">6100</text><text x="212.6" y="696.1">6100</text><text x="239.9" y="696.1">6100</text><text x="267.2" y="696.1">6100</text><text x="294.5" y="696.1">6100</text><text x="321.8" y="696.1">6100</text><text x="349.1" y="696.1">6100</text><text x="376.4" y="696.1">6100</text><text x="403.7" y="696.1">6100</text><text x="430.9" y="696.1">6100</text><text x="458.2" y="696.1">6100</text><text x="485.5" y="696.1">6100</text><text x="512.8" y="696.1">6100</text><text x="540.1" y="696.1">6100</text><text x="567.4" y="696.1">6100</text><text x="594.7" y="696.1">6100</text><text x="622.0" y="696.1">6100</text><text x="649.3" y="696.1">6100</text><text x="676.6" y="696.1">6100</text><text x="703.9" y="696.1">6100</text><text x="731.2" y="696.1">6100</text><text x="758.4" y="696.1">6100</text><text x="785.7" y="696.1">6100</text><text x="813.0" y="696.1">6100</text><text x="840.3" y="696.1">6100</text><text x="867.6" y="696.1">6100</text><text x="894.9" y="696.1">6100</text><text x="922.2" y="696.1">6100</text><text x="949.5" y="696.1">6100</text><text x="976.8" y="696.1">6100</text><text x="1004.1" y="696.1">6100</text><text x="1031.4" y="696.1">6100</text><text x="1058.7" y="696.1">6100</text><text x="1085.9" y="696.1">6100</text><text x="1113.2" y="696.1">6100</text><text x="1140.5" y="696.1">6100</text><text x="1167.8" y="696.1">6100</text><text x="1195.1" y="696.1">6100</text><text x="1222.4" y="696.1">6100</text><text x="1249.7" y="696.1">6100</text><text x="1277.0" y="696.1">6100</text><text x="1304.3" y="696.1">6100</text><text x="1331.6" y="696.1">6100</text><text x="1358.9" y="696.1">6100</text><text x="1386.2" y="696.1">6100</text></g>
<g><text x="103.4" y="713.9">316</text><text x="130.7" y="713.9">393</text><text x="158.0" y="713.9">-</text><text x="185.3" y="713.9">-</text><text x="212.6" y="713.9">-</text><text x="239.9" y="713.9">-</text><text x="267.2" y="713.9">-</text><text x="294.5" y="713.9">-</text><text x="321.8" y="713.9">-</text><text x="349.1" y="713.9">-</text><text x="376.4" y="713.9">-</text><text x="403.7" y="713.9">-</text><text x="430.9" y="713.9">-</text><text x="458.2" y="713.9">-</text><text x="485.5" y="713.9">-</text><text x="512.8" y="713.9">-</text><text x="540.1" y="713.9">-</text><text x="567.4" y="713.9">-</text><text x="594.7" y="713.9">-</text><text x="622.0" y="713.9">-</text><text x="649.3" y="713.9">-</text><text x="676.6" y="713.9">-</text><text x="703.9" y="713.9">-</text><text x="731.2" y="713.9">-</text><text x="758.4" y="713.9">-</text><text x="785.7" y="713.9">-</text><text x="813.0" y="713.9">-</text><text x="840.3" y="713.9">-</text><text x="867.6" y="713.9">-</text><text x="894.9" y="713.9">-</text><text x="922.2" y="713.9">-</text><text x="949.5" y="713.9">-</text><text x="976.8" y="713.9">-</text><text x="1004.1" y="713.9">-</text><text x="1031.4" y="713.9">-</text><text x="1058.7" y="713.9">-</text><text x="1085.9" y="713.9">-</text><text x="1113.2" y="713.9">-</text><text x="1140.5" y="713.9">-</text><text x="1167.8" y="713.9">-</text><text x="1195.1" y="713.9">-</text><text x="1222.4" y="713.9">-</text><text x="1249.7" y="713.9">-</text><text x="1277.0" y="713.9">-</text><text x="1304.3" y="713.9">-</text><text x="1331.6" y="713.9">-</text><text x="1358.9" y="713.9">-</text><text x="1386.2" y="713.9">-</text></g>
<g><text x="103.4" y="731.6">-</text><text x="130.7" y="731.6">-</text><text x="158.0" y="731.6">-</text><text x="185.3" y="731.6">-</text><text x="212.6" y="731.6">-</text><text x="239.9" y="731.6">-</text><text x="267.2" y="731.6">-</text><text x="294.5" y="731.6">-</text><text x="321.8" y="731.6">-</text><text x="349.1" y="731.6">-</text><text x="376.4" y="731.6">-</text><text x="403.7" y="731.6">-</text><text x="430.9" y="731.6">-</text><text x="458.2" y="731.6">-</text><text x="485.5" y="731.6">-</text><text x="512.8" y="731.6">-</text><text x="540.1" y="731.6">-</text><text x="567.4" y="731.6">-</text><text x="594.7" y="731.6">-</text><text x="622.0" y="731.6">-</text><text x="649.3" y="731.6">-</text><text x="676.6" y="731.6">-</text><text x="703.9" y="731.6">-</text><text x="731.2" y="731.6">-</text><text x="758.4" y="731.6">-</text><text x="785.7" y="731.6">-</text><text x="813.0" y="731.6">-</text><text x="840.3" y="731.6">-</text><text x="867.6" y="731.6">-</text><text x="894.9" y="731.6">-</text><text x="922.2" y="731.6">-</text><text x="949.5" y="731.6">-</text><text x="976.8" y="731.6">-</text><text x="1004.1" y="731.6">-</text><text x="1031.4" y="731.6">-</text><text x="1058.7" y="731.6">-</text><text x="1085.9" y="731.6">-</text><text x="1113.2" y="731.6">-</text><text x="1140.5" y="731.6">-</text><text x="1167.8" y="731.6">-</text><text x="1195.1" y="731.6">-</text><text x="1222.4" y="731.6">-</text><text x="1249.7" y="731.6">-</text><text x="1277.0" y="731.6">-</text><text x="1304.3" y="731.6">-</text><text x="1331.6" y="731.6">-</text><text x="1358.9" y="731.6">-</text><text x="1386.2" y="731.6">-</text></g>
<g><text x="103.4" y="749.3">350</text><text x="130.7" y="749.3">851</text><text x="158.0" y="749.3">-</text><text x="185.3" y="749.3">-</text><text x="212.6" y="749.3">-</text><text x="239.9" y="749.3">-</text><text x="267.2" y="749.3">-</text><text x="294.5" y="749.3">-</text><text x="321.8" y="749.3">-</text><text x="349.1" y="749.3">-</text><text x="376.4" y="749.3">-</text><text x="403.7" y="749.3">-</text><text x="430.9" y="749.3">-</text><text x="458.2" y="749.3">-</text><text x="485.5" y="749.3">-</text><text x="512.8" y="749.3">-</text><text x="540.1" y="749.3">-</text><text x="567.4" y="749.3">-</text><text x="594.7" y="749.3">-</text><text x="622.0" y="749.3">-</text><text x="649.3" y="749.3">-</text><text x="676.6" y="749.3">-</text><text x="703.9" y="749.3">-</text><text x="731.2" y="749.3">-</text><text x="758.4" y="749.3">-</text><text x="785.7" y="749.3">-</text><text x="813.0" y="749.3">-</text><text x="840.3" y="749.3">-</text><text x="867.6" y="749.3">-</text><text x="894.9" y="749.3">-</text><text x="922.2" y="749.3">-</text><text x="949.5" y="749.3">-</text><text x="976.8" y="749.3">-</text><text x="1004.1" y="749.3">-</text><text x="1031.4" y="749.3">-</text><text x="1058.7" y="749.3">-</text><text x="1085.9" y="749.3">-</text><text x="1113.2" y="749.3">-</text><text x="1140.5" y="749.3">-</text><text x="1167.8" y="749.3">-</text><text x="1195.1" y="749.3">-</text><text x="1222.4" y="749.3">-</text><text x="1249.7" y="749.3">-</text><text x="1277.0" y="749.3">-</text><text x="1304.3" y="749.3">-</text><text x="1331.6" y="749.3">-</text><text x="1358.9" y="749.3">-</text><text x="1386.2" y="749.3">-</text></g>
<g><text x="103.4" y="767.0">341</text><text x="130.7" y="767.0">1,311</text><text x="158.0" y="767.0">-</text><text x="185.3" y="767.0">-</text><text x="212.6" y="767.0">-</text><text x="239.9" y="767.0">-</text><text x="267.2" y="767.0">-</text><text x="294.5" y="767.0">-</text><text x="321.8" y="767.0">-</text><text x="349.1" y="767.0">-</text><text x="376.4" y="767.0">-</text><text x="403.7" y="767.0">-</text><text x="430.9" y="767.0">-</text><text x="458.2" y="767.0">-</text><text x="485.5" y="767.0">-</text><text x="512.8" y="767.0">-</text><text x="540.1" y="767.0">-</text><text x="567.4" y="767.0">-</text><text x="594.7" y="767.0">-</text><text x="622.0" y="767.0">-</text><text x="649.3" y="767.0">-</text><text x="676.6" y="767.0">-</text><text x="703.9" y="767.0">-</text><text x="731.2" y="767.0">-</text><text x="758.4" y="767.0">-</text><text x="785.7" y="767.0">-</text><text x="813.0" y="767.0">-</text><text x="840.3" y="767.0">-</text><text x="867.6" y="767.0">-</text><text x="894.9" y="767.0">-</text><text x="922.2" y="767.0">-</text><text x="949.5" y="767.0">-</text><text x="976.8" y="767.0">-</text><text x="1004.1" y="767.0">-</text><text x="1031.4" y="767.0">-</text><text x="1058.7" y="767.0">-</text><text x="1085.9" y="767.0">-</text><text x="1113.2" y="767.0">-</text><text x="1140.5" y="767.0">-</text><text x="1167.8" y="767.0">-</text><text x="1195.1" y="767.0">-</text><text x="1222.4" y="767.0">-</text><text x="1249.7" y="767.0">-</text><text x="1277.0" y="767.0">-</text><text x="1304.3" y="767.0">-</text><text x="1331.6" y="767.0">-</text><text x="1358.9" y="767.0">-</text><text x="1386.2" y="767.0">-</text></g>
</g>
<g font-size="7" fill="#000">
<rect x="47.300" y="692.1" width="6.400" height="6.400" fill="#e2f0ef" stroke="#a6a6a6" stroke-width="0.700"/><text x="56.500" y="696.1">Plan A&amp;B</text><rect x="47.300" y="709.9" width="6.400" height="6.400" fill="#ff7c80"/><text x="56.500" y="713.9">BWE.1</text><rect x="47.300" y="727.6" width="6.400" height="6.400" fill="#1f4e79"/><text x="56.500" y="731.6">BWE.2</text><rect x="47.300" y="745.3" width="6.400" height="6.400" fill="#00866e"/><text x="56.500" y="749.3">Line A</text><rect x="47.300" y="763.0" width="6.400" height="6.400" fill="#0bdf99"/><text x="56.500" y="767.0">Line B</text></g>
<rect x="1059.500" y="197.500" width="242" height="101" fill="#fff" fill-opacity="0.620" stroke="#8c8c8c" stroke-width="1"/>
<rect x="1059" y="172.300" width="243" height="25.400" fill="#7f7f7f"/>
<text x="1065.500" y="189.300" font-size="13.600" fill="#fff" id="tthead">Total Actual Production WA+WB</text>
<g stroke="#f0f0f0" stroke-width="0.900" fill="none"><path d="M1277.400 177.100h7.100v16.700h7.100"/></g><g fill="#fff"><circle cx="1277.400" cy="177.100" r="2.200"/><circle cx="1284.500" cy="185.700" r="2.400"/><circle cx="1291.600" cy="193.800" r="2.300"/></g>
<g font-size="13" fill="#2f5597" stroke="#2f5597" stroke-width="0.250">
<text x="1065.500" y="217.300" id="tt1">DAY : 3,562.35 BCM. (5.52 %)</text>
<text x="1065.500" y="241.900" id="tt2">NIGHT : 0.00 BCM. (0.00 %)</text>
<text x="1067.800" y="265.800" id="tt3">Total : 3,562.35 BCM. (5.52 %)</text>
<text x="1067.800" y="287.200" id="tt4" fill="#1f4e79" stroke="#1f4e79" stroke-width="0.450">MTD = 437,045.00 BCM</text>
</g>
<rect x="1304.500" y="202.800" width="83" height="32.400" fill="#ffd966" stroke="#000" stroke-width="1" stroke-dasharray="3 2"/>
<text x="1348.300" y="223.800" font-size="14.300" fill="#595959" text-anchor="middle" id="ylab">129,124.00</text>
<rect x="1313.500" y="621.500" width="67.500" height="32.800" fill="#a9d18e" stroke="#000" stroke-width="1" stroke-dasharray="3 2"/>
<text x="1349.300" y="643" font-size="14.400" fill="#595959" text-anchor="middle" id="glab">3,562.35</text>
<path d="M1423.300 682.300H1461.500" stroke="#ffc000" stroke-width="3.200"/>
<defs><linearGradient id="emg" x1="0" y1="0" x2="0" y2="1"><stop offset="0" stop-color="#ffd84a"/><stop offset="0.550" stop-color="#fdb62f"/><stop offset="1" stop-color="#ee8a1c"/></linearGradient></defs><g><circle cx="1474" cy="681.500" r="10.500" fill="url(#emg)" stroke="#e58a1a" stroke-width="0.700"/><ellipse cx="1470.400" cy="679.300" rx="1.100" ry="1.800" fill="#5b3a10"/><ellipse cx="1477.600" cy="679.300" rx="1.100" ry="1.800" fill="#5b3a10"/><path d="M1467 683.600q7 1.600 14 0q-.6 6.400-7 6.400t-7-6.400z" fill="#6b3a12"/><path d="M1467.300 683.900q6.700 1.500 13.400 0q-.2 2-1.200 3.200q-5.500 1-11 0q-1-1.200-1.200-3.200z" fill="#fff"/></g>
<text transform="translate(1468.700 701.500) rotate(90)" font-size="8.600" font-weight="bold" fill="#000" id="psd">Plan Shift Day</text>
<rect x="1424.700" y="752.700" width="35" height="4.800" fill="#6bbfad" stroke="#14856b" stroke-width="1.300"/>
<text x="1425.300" y="774.200" font-size="11.600" font-weight="bold" fill="#000" id="pct">5.52%</text>
</svg>
<div id="tabbar" class="abs"></div>
<svg class="abs" style="left:0;top:803px" width="100" height="27" viewBox="0 0 100 27"><path d="M22 9.500v7l-4-3.500z" fill="#c3c3c3"/><path d="M47 9.500v7l4-3.500z" fill="#c3c3c3"/><path d="M91.500 2v22" stroke="#8f8f8f" stroke-width="1"/></svg>
<div class="tab" style="left:94px;width:108.500px;background:#ffc000;color:#1a1a1a;text-align:left;padding-left:12.200px">Input Data&nbsp;<svg style="vertical-align:-4px;margin-left:2px" width="16" height="16" viewBox="0 0 16 16" fill="none" stroke="#1a1a1a" stroke-width="1.100" stroke-linejoin="round"><g transform="translate(9 7) rotate(45)"><path d="M-3.800 2.200h7.600M-2 2.200v-4.300l-1.100-1.300v-1.800h6.200v1.800l-1.100 1.300v4.300M0 2.200v6.300"/></g></svg></div>
<div class="abs" style="left:204px;top:806px;width:1px;height:21px;background:#9a9a9a"></div>
<div class="tab" style="left:207px;width:107.500px;background:#ffc000;color:#1a1a1a;text-align:left;padding-left:10px">Report 30 นาที</div>
<div class="tab" style="left:316.500px;top:803px;width:102px;height:24.500px;line-height:24px;background:linear-gradient(#fff 40%,#d6eadf);color:#217346;font-weight:bold;border-bottom:2px solid #217346;border-left:1px solid #ababab;border-right:1px solid #ababab">Report 1 ชม.</div>
<div class="tab" style="left:422px;width:150px;background:#00866e;color:#fff">Sum Production A&amp;B</div>
<div class="abs" style="left:574px;top:806px;width:1px;height:21px;background:#9a9a9a"></div>
<div class="tab" style="left:576.500px;width:143.500px;background:#001f7a;color:#fff">Report ก่อนเปลี่ยนกะ</div>
<div class="abs" style="left:722px;top:806px;width:1px;height:21px;background:#9a9a9a"></div>
<svg class="abs" style="left:754px;top:806px" width="20" height="20" viewBox="0 0 20 20" fill="none" stroke="#6a6a6a" stroke-width="1.200"><circle cx="9.800" cy="10" r="7.300"/><path d="M9.800 6v8M5.800 10h8"/></svg>
<svg class="abs" style="left:1250px;top:806px" width="330" height="22" viewBox="1250 806 330 22"><g fill="#9a9a9a"><rect x="1255.300" y="810.500" width="1.500" height="1.500"/><rect x="1255.300" y="815" width="1.500" height="1.500"/><rect x="1255.300" y="819.500" width="1.500" height="1.500"/></g><rect x="1272.500" y="809.500" width="297" height="13.500" fill="#fff" stroke="#ababab"/><path d="M1287.500 809.500v13.500M1553.500 809.500v13.500" stroke="#ababab"/><path d="M1282.500 812.500v7.500l-4.500-3.700z" fill="#555"/><path d="M1559 812.500v7.500l4.500-3.700z" fill="#555"/></svg>
<div id="status" class="abs"><div class="t" style="left:-1px;color:#333">Calculate</div><svg class="abs" style="left:64px;top:2px" width="16" height="14" viewBox="0 0 16 14"><circle cx="3.800" cy="3.500" r="2.300" fill="#555"/><path d="M7.500 2.500h6.500v11h-11v-6" fill="none" stroke="#666" stroke-width="1"/><path d="M5 8.500h8M5 11h8M8 6.500v6M11 6.500v6" stroke="#888" stroke-width=".8" stroke-dasharray="1.500 1"/></svg><svg class="abs" style="left:94px;top:2px" width="18" height="14" viewBox="0 0 18 14" fill="none" stroke="#444" stroke-width="1.100"><path d="M7 1.500a5.500 5.500 0 1 0 5 8"/><path d="M7 1.500v4.500M4.500 4h5"/><path d="M9 9l6 3M15 8l-5 5M12 7v6" stroke-width="1"/></svg><div class="t" style="left:113.500px;color:#333">Accessibility: Investigate</div><div class="abs" style="left:1298px;top:0;width:39px;height:16px;background:#d2d2d2"></div><svg class="abs" style="left:1298px;top:0" width="284" height="16" viewBox="1298 830 284 16" fill="none" stroke="#5a5a5a" stroke-width="1.250"><rect x="1311.500" y="833.500" width="12" height="12"/><path d="M1311.500 837.500h12M1311.500 841.500h12M1315.500 833.500v12M1319.500 833.500v12"/><rect x="1351.500" y="833.500" width="10" height="12"/><rect x="1353.500" y="836.500" width="6" height="8" stroke-width=".8"/><path d="M1354.500 838.500h4M1354.500 840.500h4M1354.500 842.500h4" stroke-width=".7"/><path d="M1390.500 846v-12.500h12.500v12.500M1396.500 833.500v6h6.500"/><path d="M1423.500 842.500h7" stroke="#444" stroke-width="1.300"/><path d="M1436.500 842.500h99" stroke="#a8a8a8"/><path d="M1486.500 840v5" stroke="#a8a8a8"/><rect x="1469" y="837" width="4" height="9" fill="#555" stroke="none"/><path d="M1540.500 842.500h8M1544.500 838.500v8" stroke="#444" stroke-width="1.300"/></svg><div class="t" style="left:1561px;color:#333">70%</div></div>
</body></html>
